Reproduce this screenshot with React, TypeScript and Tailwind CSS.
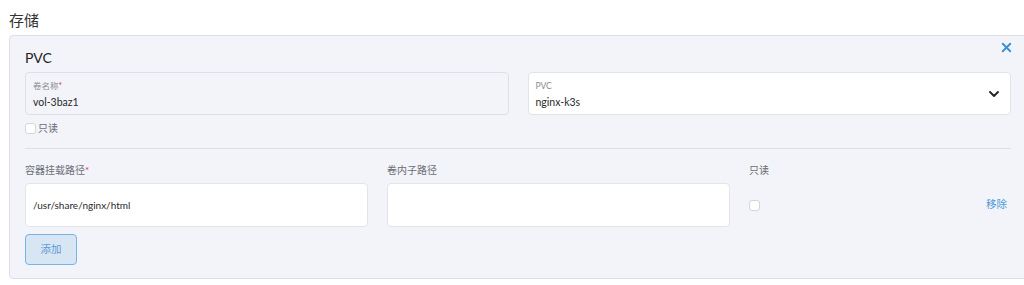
import React from 'react';
import { ChevronDown, X } from 'lucide-react';

const font = { fontFamily: 'Lato, "Noto Sans CJK SC", sans-serif' };

function Checkbox() {
  return (
    <span className="inline-block h-[11px] w-[11px] rounded-[3px] border border-[#d4d6de] bg-white" />
  );
}

function Label({ text, required = false }: { text: string; required?: boolean }) {
  return (
    <div className="h-4 text-[10px] leading-4 text-[#6b6d75]">
      {text}
      {required && <span className="text-[#e0343a]">*</span>}
    </div>
  );
}

export default function App() {
  return (
    <div className="h-[285px] w-[1024px] overflow-hidden bg-white" style={font}>
      <h1 className="pl-[9px] pt-[8px] text-[15px] leading-6 text-[#333]">存储</h1>

      <div className="relative ml-[9px] mt-[3px] w-[1018px] rounded-[4px] border border-[#dfe0e7] bg-[#f3f4f9] px-[15px] pb-[13px] pt-[12px]">
        <button className="absolute right-[12px] top-[4px] text-[#3b8fd8]">
          <X size={15} strokeWidth={3} />
        </button>

        <h2 className="text-[14px] leading-5 text-[#222]">PVC</h2>

        <div className="mt-[4px] grid grid-cols-2 gap-[19px]">
          <div className="h-[43px] rounded-[4px] border border-[#dfe0e7] bg-[#f3f4f9] px-[7px] pt-[7px]">
            <div className="text-[8.5px] leading-3 text-[#8a8c94]">
              卷名称<span className="text-[#e0343a]">*</span>
            </div>
            <div className="mt-[2px] text-[10.5px] leading-4 text-[#2a2a2a]">vol-3baz1</div>
          </div>
          <div className="flex h-[43px] items-center justify-between rounded-[4px] border border-[#e3e4ea] bg-white pl-[7px] pr-[8px]">
            <div className="pt-[2px]">
              <div className="text-[8.5px] leading-3 text-[#8a8c94]">PVC</div>
              <div className="mt-[2px] text-[10.5px] leading-4 text-[#2a2a2a]">nginx-k3s</div>
            </div>
            <ChevronDown size={16} strokeWidth={2.75} className="text-[#222]" />
          </div>
        </div>

        <label className="mt-[5px] flex h-4 items-center gap-[2px] text-[10px] text-[#6b6d75]">
          <Checkbox />
          只读
        </label>

        <div className="mt-[12px] border-t border-[#dedfe6]" />

        <div className="mt-[13px] flex gap-[19px]">
          <div className="w-[343px]">
            <Label text="容器挂载路径" required />
            <div className="mt-[5px] flex h-[44px] items-center rounded-[4px] border border-[#e3e4ea] bg-white px-[7px] text-[10px] text-[#2a2a2a]">
              /usr/share/nginx/html
            </div>
          </div>
          <div className="w-[343px]">
            <Label text="卷内子路径" />
            <div className="mt-[5px] h-[44px] rounded-[4px] border border-[#e3e4ea] bg-white" />
          </div>
          <div className="flex-1">
            <Label text="只读" />
            <div className="mt-[5px] flex h-[44px] items-center justify-between pr-[4px]">
              <Checkbox />
              <button className="text-[10.5px] text-[#4a9ad8]">移除</button>
            </div>
          </div>
        </div>

        <button className="mt-[7px] h-[31px] w-[52px] rounded-[4px] border border-[#74b4e8] bg-[#d8e6f4] text-[10.5px] text-[#5b9ad3]">
          添加
        </button>
      </div>
    </div>
  );
}
